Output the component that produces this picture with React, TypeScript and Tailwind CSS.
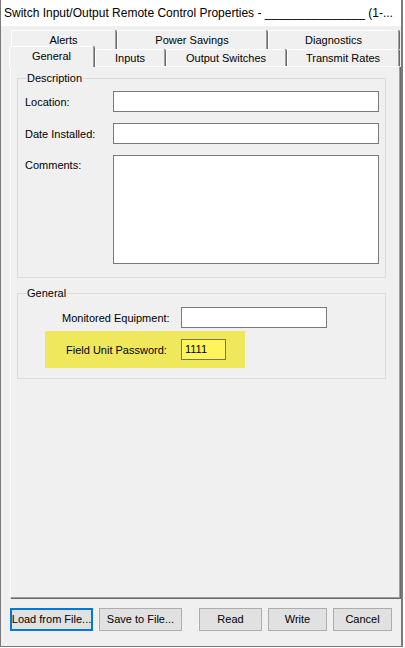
import React from "react";

const font = "font-['Liberation_Sans',Arial,sans-serif]";

const Tab = ({
  label,
  width,
  selected = false,
}: {
  label: string;
  width: string;
  selected?: boolean;
}) => (
  <div
    className={`${width} flex items-center justify-center bg-[#f0f0f0] border-l border-t border-white border-r border-r-[#a0a0a0] shadow-[1px_0_0_#696969] rounded-t-[2px] text-[11px] text-black whitespace-nowrap ${
      selected ? "h-[21px] -ml-[1px] pb-[2px] relative z-10" : "h-full"
    }`}
  >
    {label}
  </div>
);

const GroupBox = ({
  title,
  className,
  children,
}: {
  title: string;
  className: string;
  children: React.ReactNode;
}) => (
  <div className={`relative border border-[#dcdcdc] ${className}`}>
    <span className="absolute -top-[8px] left-[8px] bg-[#f0f0f0] px-[1px] text-[11px] leading-[14px]">
      {title}
    </span>
    {children}
  </div>
);

const Field = ({ className }: { className: string }) => (
  <div className={`bg-white border border-[#7a7a7a] ${className}`} />
);

const Button = ({
  label,
  width,
  focused = false,
}: {
  label: string;
  width: string;
  focused?: boolean;
}) => (
  <div
    className={`${width} h-[23px] flex items-center justify-center bg-[#e1e1e1] text-[11px] whitespace-nowrap ${
      focused ? "border-2 border-[#0078d7]" : "border border-[#adadad]"
    }`}
  >
    {label}
  </div>
);

export default function App() {
  return (
    <div className={`w-[405px] h-[648px] bg-white flex ${font} text-black`}>
      <div className="w-[403px] h-[647px] flex flex-col border-l border-r-2 border-b border-[#7a7a7a] bg-[#f0f0f0]">
        {/* Title bar */}
        <div className="h-[26px] bg-white flex items-center pl-[3px] text-[12px] whitespace-nowrap overflow-hidden">
          Switch Input/Output Remote Control Properties - _______________ (1-...
        </div>

        {/* Tabs */}
        <div className="flex flex-col pl-[9px] pt-[4px]">
          <div className="flex h-[19px] ml-[1px] gap-[1px]">
            <Tab label="Alerts" width="w-[105px]" />
            <Tab label="Power Savings" width="w-[150px]" />
            <Tab label="Diagnostics" width="w-[131px]" />
          </div>
          <div className="flex items-end h-[18px] gap-[1px] -mb-px">
            <Tab label="General" width="w-[85px]" selected />
            <Tab label="Inputs" width="w-[70px]" />
            <Tab label="Output Switches" width="w-[120px]" />
            <Tab label="Transmit Rates" width="w-[112px]" />
          </div>

          {/* Panel */}
          <div className="w-[390px] h-[532px] border-l border-t border-white border-r border-b border-r-[#a0a0a0] border-b-[#a0a0a0] shadow-[1px_1px_0_#696969] pl-[6px] pt-[11px] text-[11px]">
            <GroupBox title="Description" className="w-[369px] h-[200px] pl-[7px] pr-[6px] pt-[12px]">
              <div className="flex flex-col gap-[11px]">
                <div className="flex items-center h-[21px]">
                  <span className="w-[88px] pt-[1px]">Location:</span>
                  <Field className="flex-1 h-[21px]" />
                </div>
                <div className="flex items-center h-[21px]">
                  <span className="w-[88px] pt-[1px]">Date Installed:</span>
                  <Field className="flex-1 h-[21px]" />
                </div>
                <div className="flex items-start">
                  <span className="w-[88px] pt-[2px]">Comments:</span>
                  <Field className="flex-1 h-[109px]" />
                </div>
              </div>
            </GroupBox>

            <GroupBox title="General" className="w-[369px] h-[86px] mt-[15px] pl-[27px] pt-[13px]">
              <div className="flex items-center h-[21px] pl-[17px]">
                <span className="w-[119px] pt-[1px]">Monitored Equipment:</span>
                <Field className="w-[146px] h-[21px]" />
              </div>
              <div className="flex items-center w-[200px] h-[37px] mt-[3px] bg-[#efe85c] pl-[21px]">
                <span className="w-[115px] pt-[1px]">Field Unit Password:</span>
                <div className="w-[45px] h-[21px] bg-[#fff55a] border border-[#7a7850] flex items-center pl-[3px] text-[11px]">
                  1111
                </div>
              </div>
            </GroupBox>
          </div>
        </div>

        {/* Buttons */}
        <div className="flex items-center pl-[9px] mt-[10px]">
          <Button label="Load from File..." width="w-[83px]" focused />
          <Button label="Save to File..." width="w-[83px] ml-[6px]" />
          <Button label="Read" width="w-[63px] ml-[17px]" />
          <Button label="Write" width="w-[59px] ml-[6px]" />
          <Button label="Cancel" width="w-[59px] ml-[6px]" />
        </div>
      </div>
    </div>
  );
}
